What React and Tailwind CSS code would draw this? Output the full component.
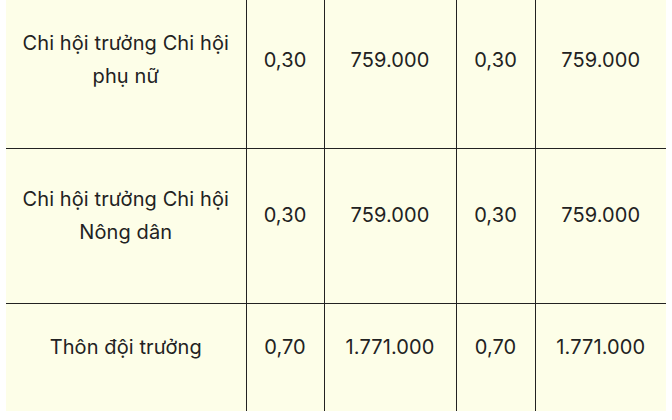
import React from "react";

// Salary table fragment: role, coefficient, amount (two periods)
const rows = [
  { role: "Chi hội trưởng Chi hội phụ nữ", k1: "0,30", v1: "759.000", k2: "0,30", v2: "759.000", h: "h-[155px]" },
  { role: "Chi hội trưởng Chi hội Nông dân", k1: "0,30", v1: "759.000", k2: "0,30", v2: "759.000", h: "h-[155px]" },
  { role: "Thôn đội trưởng", k1: "0,70", v1: "1.771.000", k2: "0,70", v2: "1.771.000", h: "h-[108px]" },
];

export default function App() {
  return (
    <div className="w-[672px] h-[420px] overflow-hidden bg-white">
      <table
        className="ml-[6px] mt-[-7px] w-[660px] table-fixed border-collapse bg-[#fdfee8] text-[#222222] text-[20px] leading-[33px] tracking-[0.1px] text-center"
        style={{ fontFamily: "Inter, 'Noto Sans', sans-serif" }}
      >
        <colgroup>
          <col className="w-[240px]" />
          <col className="w-[78px]" />
          <col className="w-[132px]" />
          <col className="w-[79px]" />
          <col className="w-[131px]" />
        </colgroup>
        <tbody>
          {rows.map((r, i) => {
            const last = i === rows.length - 1;
            const b = last ? "" : "border-b border-b-[#222222]";
            return (
              <tr key={i} className={r.h}>
                <td className={`px-3 pb-5 align-middle border-r border-r-[#222222] ${b}`}>{r.role}</td>
                <td className={`px-1 pb-5 align-middle border-r border-r-[#222222] ${b}`}>{r.k1}</td>
                <td className={`px-1 pb-5 align-middle border-r border-r-[#222222] ${b}`}>{r.v1}</td>
                <td className={`px-1 pb-5 align-middle border-r border-r-[#222222] ${b}`}>{r.k2}</td>
                <td className={`px-1 pb-5 align-middle ${b}`}>{r.v2}</td>
              </tr>
            );
          })}
        </tbody>
      </table>
    </div>
  );
}
